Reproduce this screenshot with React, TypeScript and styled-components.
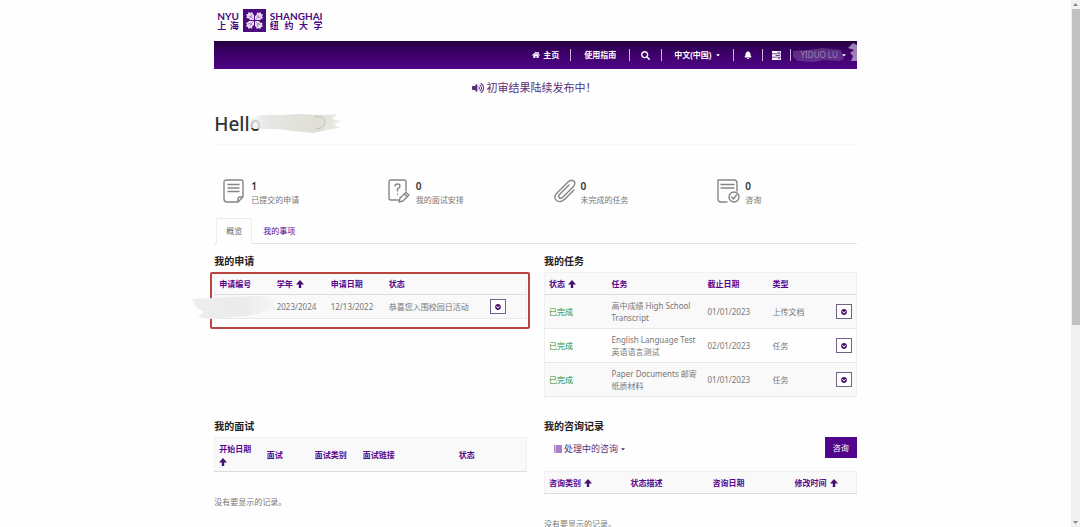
import React from "react";
import styled, { createGlobalStyle } from "styled-components";
import {
  FaHome,
  FaSearch,
  FaBell,
  FaVolumeUp,
  FaChevronCircleDown,
  FaCaretDown,
} from "react-icons/fa";

const GlobalStyle = createGlobalStyle`
  * { box-sizing: border-box; }
  body {
    margin: 0;
    background: #fefefe;
    color: #777;
    font-family: "Noto Sans", "Noto Sans CJK SC", sans-serif;
    font-size: 8px;
    line-height: 12px;
  }
  a { text-decoration: none; }
  h1, h2, p { margin: 0; }
`;

const Shell = styled.div`
  display: flex;
  height: 100vh;
  overflow: hidden;
`;

const Page = styled.div`
  flex: 1;
  min-width: 0;
`;

const Container = styled.div`
  width: 60%;
  margin: 0 auto;
`;

const ScrollTrack = styled.div`
  display: flex;
  flex-direction: column;
  align-items: center;
  width: 9px;
  background: #f1f1f1;
`;

const ScrollThumb = styled.div`
  width: 8px;
  height: 60%;
  background: #c1c1c1;
`;

const ScrollArrow = styled.svg`
  width: 9px;
  height: 9px;
  fill: #888;
  &:last-child { margin-top: auto; }
`;

const Brand = styled.header`
  display: flex;
  align-items: center;
  gap: 4px;
  height: 41px;
  padding-left: 3px;
  color: #4b0b80;
`;

const BrandWords = styled.div`
  display: flex;
  flex-direction: column;
  font-weight: 700;
  font-family: Lato, "Noto Sans CJK SC", sans-serif;
`;

const BrandLatin = styled.span`
  font-size: 10px;
  line-height: 9px;
`;

const BrandHan = styled.span`
  display: flex;
  justify-content: space-between;
  font-size: 9px;
  line-height: 9px;
`;

const Navbar = styled.nav`
  display: flex;
  align-items: center;
  justify-content: flex-end;
  position: relative;
  height: 28px;
  background: linear-gradient(#26003f, #3b0066 40%, #4f0586);
`;

const NavLink = styled.a<{ $pad?: number }>`
  display: flex;
  align-items: center;
  gap: 3px;
  height: 12px;
  padding: 0 ${(p) => p.$pad ?? 12}px;
  color: #fff;
  font-weight: 700;
  border-left: 1px solid #c9b5d8;
  &:first-child { border-left: 0; }
`;

const UserName = styled.span`
  color: #9c80b5;
  font-weight: 400;
`;

const NavSmudge = styled.svg`
  position: absolute;
  right: 0;
  top: 2px;
  width: 64px;
  height: 24px;
`;

const Notice = styled.p`
  display: flex;
  align-items: center;
  justify-content: center;
  gap: 3px;
  padding: 9px 3px 0 0;
  color: #57307a;
  font-size: 11px;
  line-height: 20px;
`;

const Greeting = styled.h1`
  position: relative;
  height: 47px;
  padding-top: 12px;
  border-bottom: 1px solid #f6f6f6;
  color: #333;
  font-size: 19px;
  font-weight: 500;
  line-height: 28px;
`;

const GreetingSmudge = styled.svg`
  position: absolute;
  left: 34px;
  top: 13px;
  width: 96px;
  height: 25px;
`;

const Stats = styled.section`
  display: grid;
  grid-template-columns: repeat(4, 1fr);
  margin-right: -16px;
  padding: 32px 0 11px;
`;

const Stat = styled.div`
  display: flex;
  gap: 4px;
  padding-left: 9px;
  line-height: 14px;
`;

const StatIcon = styled.svg`
  width: 24px;
  height: 28px;
  fill: none;
  stroke: #858585;
  stroke-width: 1.4;
  stroke-linecap: round;
  stroke-linejoin: round;
`;

const StatValue = styled.div`
  padding-top: 3px;
  color: #333;
  font-size: 10px;
  font-weight: 600;
  line-height: 13px;
`;

const Tabs = styled.div`
  display: flex;
  padding-left: 2px;
  border-bottom: 1px solid #e2e2e2;
`;

const Tab = styled.button<{ $active?: boolean }>`
  height: 26px;
  margin-bottom: -1px;
  padding: 0 ${(p) => (p.$active ? 9 : 10)}px;
  border: 1px solid ${(p) => (p.$active ? "#ececec" : "transparent")};
  border-bottom-color: ${(p) => (p.$active ? "#fefefe" : "transparent")};
  background: ${(p) => (p.$active ? "#fefefe" : "transparent")};
  color: ${(p) => (p.$active ? "#666" : "#57068c")};
  font: inherit;
`;

const Panels = styled.main`
  display: grid;
  grid-template-columns: 1fr 1fr;
  column-gap: 17px;
`;

const Panel = styled.section`
  min-width: 0;
  min-height: 165px;
  padding-top: 8px;
`;

const PanelTitle = styled.h2`
  padding-bottom: 2px;
  color: #222;
  font-size: 10px;
  font-weight: 700;
  line-height: 18px;
`;

const Table = styled.table`
  width: 100%;
  table-layout: fixed;
  border-collapse: collapse;
  border: 1px solid #f0f0f0;
`;

const HeadRow = styled.tr<{ $tall?: boolean }>`
  height: ${(p) => (p.$tall ? 34 : 22)}px;
  background: #f9f9f9;
  border-bottom: 1px solid #ddd;
`;

const Th = styled.th<{ $w?: number }>`
  width: ${(p) => (p.$w ? p.$w + "px" : "auto")};
  padding: 0 4px;
  color: #57068c;
  font-weight: 700;
  text-align: left;
`;

const SortIcon = styled.svg<{ $block?: boolean }>`
  display: ${(p) => (p.$block ? "block" : "inline")};
  width: 8px;
  height: 8px;
  margin: ${(p) => (p.$block ? "3px 0 0" : "0 0 0 3px")};
  vertical-align: -1px;
  fill: #43106b;
`;

const Row = styled.tr<{ $short?: boolean }>`
  height: ${(p) => (p.$short ? 24 : 34)}px;
  border-bottom: 1px solid #e8e8e8;
  &:nth-child(odd) { background: #f9f9f9; }
`;

const Td = styled.td<{ $done?: boolean; $end?: number }>`
  padding: 0 ${(p) => p.$end ?? 4}px 0 4px;
  color: ${(p) => (p.$done ? "#2b8a2b" : "#777")};
`;

const ActionButton = styled.button`
  display: flex;
  align-items: center;
  justify-content: center;
  width: 16px;
  height: 15px;
  margin-left: auto;
  padding: 0;
  border: 1px solid #75608a;
  background: #fefefe;
  color: #43106b;
`;

const TableWrap = styled.div`
  position: relative;
`;

const Highlight = styled.div`
  position: absolute;
  inset: 0 -3px auto -4px;
  height: 57px;
  border: 2px solid #b9453f;
  border-radius: 2px;
  pointer-events: none;
`;

const RowSmudge = styled.svg`
  position: absolute;
  left: -22px;
  top: 21px;
  width: 88px;
  height: 28px;
`;

const Empty = styled.p`
  padding-top: 24px;
`;

const Toolbar = styled.div`
  display: flex;
  align-items: flex-start;
  justify-content: space-between;
  height: 34px;
`;

const FilterButton = styled.button`
  display: flex;
  align-items: center;
  gap: 2px;
  height: 24px;
  padding: 0 10px;
  border: 0;
  background: none;
  color: #57307a;
  font: inherit;
  font-size: 9px;
`;

const PrimaryButton = styled.button`
  width: 32px;
  height: 21px;
  padding: 0;
  border: 0;
  background: #51058a;
  color: #fff;
  font: inherit;
`;

const tasks = [
  ["高中成绩 High School Transcript", "01/01/2023", "上传文档"],
  ["English Language Test 英语语言测试", "02/01/2023", "任务"],
  ["Paper Documents 邮寄纸质材料", "01/01/2023", "任务"],
];

const SortUp = ({ block }: { block?: boolean }) => (
  <SortIcon $block={block} viewBox="0 0 8 8" aria-hidden="true">
    <path d="M4 0L8 4.400H5.200V8H2.800V4.400H0Z" />
  </SortIcon>
);

const RowAction = () => (
  <ActionButton aria-label="操作">
    <FaChevronCircleDown size={6} />
  </ActionButton>
);

const petal =
  "M11 11L7 11L6 9.500L3.500 9L4 7L3 5.500L5 5L5.500 3L7.500 4L9 3L10 5L11 6Z";

export default function App() {
  return (
    <Shell>
      <GlobalStyle />
      <Page>
        <Container>
          <Brand>
            <BrandWords>
              <BrandLatin>NYU</BrandLatin>
              <BrandHan><span>上</span><span>海</span></BrandHan>
            </BrandWords>
            <svg width="23" height="23" viewBox="0 0 23 23" aria-hidden="true">
              <rect width="23" height="23" fill="#4b0b80" />
              {[0, 90, 180, 270].map((angle) => (
                <g key={angle} transform={`rotate(${angle} 11.500 11.500)`}>
                  <path d={petal} fill="#eadff2" />
                  <path d="M7 7L10.500 10.500M5.500 7L8 9M8 5L9 8" fill="none" stroke="#8c62ad" strokeWidth="0.700" />
                </g>
              ))}
            </svg>
            <BrandWords>
              <BrandLatin>SHANGHAI</BrandLatin>
              <BrandHan><span>纽</span><span>约</span><span>大</span><span>学</span></BrandHan>
            </BrandWords>
          </Brand>

          <Navbar>
            <NavLink href="#home" $pad={11}><FaHome size={8} />主页</NavLink>
            <NavLink href="#guide" $pad={13}>使用指南</NavLink>
            <NavLink href="#search" $pad={11} aria-label="搜索"><FaSearch size={9} /></NavLink>
            <NavLink href="#language">中文(中国)<FaCaretDown size={6} /></NavLink>
            <NavLink href="#alerts" $pad={10} aria-label="通知"><FaBell size={8} /></NavLink>
            <NavLink href="#tasks" $pad={9} aria-label="任务">
              <svg width="9" height="9" viewBox="0 0 9 9" aria-hidden="true">
                <path d="M0 0H9V2.500H0ZM0 3.300H9V5.700H0ZM0 6.500H9V9H0Z" fill="#fff" />
                <path d="M5.500 1.200H8M3.500 4.500H8M6 7.700H8" stroke="#4b0b80" strokeWidth="0.800" />
              </svg>
            </NavLink>
            <NavLink href="#account" $pad={10}>
              <UserName>YIDUO LU</UserName><FaCaretDown size={6} />
            </NavLink>
            <NavSmudge viewBox="0 0 64 24" aria-hidden="true">
              <path d="M0 8L14 7L30 5L48 7L51 16L46 18L30 17L22 19L5 18L0 14Z" fill="#9b80b5" opacity="0.350" />
              <path d="M55 5L60 0L64 2V18L58 18L60 13L57 10L61 7Z" fill="#d6c8e0" opacity="0.650" />
            </NavSmudge>
          </Navbar>

          <Notice><FaVolumeUp size={12} />初审结果陆续发布中！</Notice>
          <Greeting>
            Hello
            <GreetingSmudge viewBox="0 0 96 25" aria-hidden="true">
              <defs>
                <linearGradient id="greetingFade">
                  <stop offset="0" stopColor="#f4f4f4" stopOpacity="0.700" />
                  <stop offset="0.200" stopColor="#e6e6e4" />
                  <stop offset="0.750" stopColor="#dfdfd6" />
                  <stop offset="1" stopColor="#efefed" />
                </linearGradient>
              </defs>
              <path d="M1 9L12 4L35 4L50 3L78 4L90 3L84 8L94 10L86 13L92 17L78 19L66 22L45 20L28 18L12 18L2 17Z" fill="url(#greetingFade)" />
              <path d="M66 6Q76 4 77 11Q77 17 68 18" fill="none" stroke="#c3c3b8" />
            </GreetingSmudge>
          </Greeting>

          <Stats>
            <Stat>
              <StatIcon viewBox="0 0 24 28">
                <path d="M4 3H18Q20 3 20 5V20L15 25H4Q1 25 1 22V5Q1 3 4 3ZM15 25V22Q15 20 17 20H20M5 7.500H16M5 11H16M5 14.500H16" />
              </StatIcon>
              <div><StatValue>1</StatValue>已提交的申请</div>
            </Stat>
            <Stat>
              <StatIcon viewBox="0 0 24 28">
                <path d="M10 23H3Q1 23 1 21V5Q1 3 3 3H16Q18 3 18 5V14M7 9Q7 7 9.500 7Q12 7 12 9Q12 11 9.500 12V14M9.500 17V17.300M12 21L18 15.500L21 18L15 24L11 25ZM16.500 17L19 19.500" />
              </StatIcon>
              <div><StatValue>0</StatValue>我的面试安排</div>
            </Stat>
            <Stat>
              <StatIcon viewBox="0 0 24 28">
                <path d="M16 8L7 17C4 20 7 23 10 20L20 10C25 5 19 1 15 5L4 16C-2 22 6 28 12 22L21 13M7 13L13 7" />
              </StatIcon>
              <div><StatValue>0</StatValue>未完成的任务</div>
            </Stat>
            <Stat>
              <StatIcon viewBox="0 0 24 28">
                <path d="M10 25H4Q1 25 1 22V3H17Q20 3 20 6V14M4 7.500H17M4 11H17M14.500 20L16.500 22L19.500 18" />
                <circle cx="17" cy="20" r="5" />
              </StatIcon>
              <div><StatValue>0</StatValue>咨询</div>
            </Stat>
          </Stats>

          <Tabs role="tablist">
            <Tab role="tab" aria-selected="true" $active>概览</Tab>
            <Tab role="tab" aria-selected="false">我的事项</Tab>
          </Tabs>

          <Panels>
            <Panel>
              <PanelTitle>我的申请</PanelTitle>
              <TableWrap>
                <Table>
                  <thead>
                    <HeadRow>
                      <Th $w={58}>申请编号</Th>
                      <Th $w={54}>学年<SortUp /></Th>
                      <Th $w={58}>申请日期</Th>
                      <Th>状态</Th>
                      <Th $w={44} />
                    </HeadRow>
                  </thead>
                  <tbody>
                    <Row $short>
                      <Td />
                      <Td>2023/2024</Td>
                      <Td>12/13/2022</Td>
                      <Td>恭喜您入围校园日活动</Td>
                      <Td $end={20}><RowAction /></Td>
                    </Row>
                  </tbody>
                </Table>
                <Highlight />
                <RowSmudge viewBox="0 0 88 28" aria-hidden="true">
                  <defs>
                    <linearGradient id="rowFade">
                      <stop offset="0" stopColor="#ededed" />
                      <stop offset="0.600" stopColor="#ebebeb" />
                      <stop offset="1" stopColor="#f7f7f7" />
                    </linearGradient>
                  </defs>
                  <path d="M0 6L20 5L38 4L66 3L86 5L82 11L85 17L70 19L60 22L40 24L18 26L6 24L12 19L5 15Z" fill="url(#rowFade)" />
                </RowSmudge>
              </TableWrap>
            </Panel>

            <Panel>
              <PanelTitle>我的任务</PanelTitle>
              <Table>
                <thead>
                  <HeadRow>
                    <Th $w={63}>状态<SortUp /></Th>
                    <Th $w={96}>任务</Th>
                    <Th $w={65}>截止日期</Th>
                    <Th>类型</Th>
                    <Th $w={28} />
                  </HeadRow>
                </thead>
                <tbody>
                  {tasks.map(([name, date, kind]) => (
                    <Row key={name}>
                      <Td $done>已完成</Td>
                      <Td>{name}</Td>
                      <Td>{date}</Td>
                      <Td>{kind}</Td>
                      <Td><RowAction /></Td>
                    </Row>
                  ))}
                </tbody>
              </Table>
            </Panel>

            <Panel>
              <PanelTitle>我的面试</PanelTitle>
              <Table>
                <thead>
                  <HeadRow $tall>
                    <Th $w={48}>开始日期<SortUp block /></Th>
                    <Th $w={48}>面试</Th>
                    <Th $w={48}>面试类别</Th>
                    <Th $w={96}>面试链接</Th>
                    <Th>状态</Th>
                  </HeadRow>
                </thead>
              </Table>
              <Empty>没有要显示的记录。</Empty>
            </Panel>

            <Panel>
              <PanelTitle>我的咨询记录</PanelTitle>
              <Toolbar>
                <FilterButton>
                  <svg width="8" height="8" viewBox="0 0 8 8" aria-hidden="true">
                    <path d="M0 1H1.500M2 1H8M0 3H1.500M2 3H8M0 5H1.500M2 5H8M0 7H1.500M2 7H8" stroke="#57068c" strokeWidth="1.200" />
                  </svg>
                  处理中的咨询
                  <FaCaretDown size={6} />
                </FilterButton>
                <PrimaryButton>咨询</PrimaryButton>
              </Toolbar>
              <Table>
                <thead>
                  <HeadRow>
                    <Th $w={82}>咨询类别<SortUp /></Th>
                    <Th $w={82}>状态描述</Th>
                    <Th $w={82}>咨询日期</Th>
                    <Th>修改时间<SortUp /></Th>
                  </HeadRow>
                </thead>
              </Table>
              <Empty>没有要显示的记录。</Empty>
            </Panel>
          </Panels>
        </Container>
      </Page>
      <ScrollTrack aria-hidden="true">
        <ScrollArrow viewBox="0 0 9 9"><path d="M2 6L4.500 3L7 6Z" /></ScrollArrow>
        <ScrollThumb />
        <ScrollArrow viewBox="0 0 9 9"><path d="M2 3L4.500 6L7 3Z" /></ScrollArrow>
      </ScrollTrack>
    </Shell>
  );
}
